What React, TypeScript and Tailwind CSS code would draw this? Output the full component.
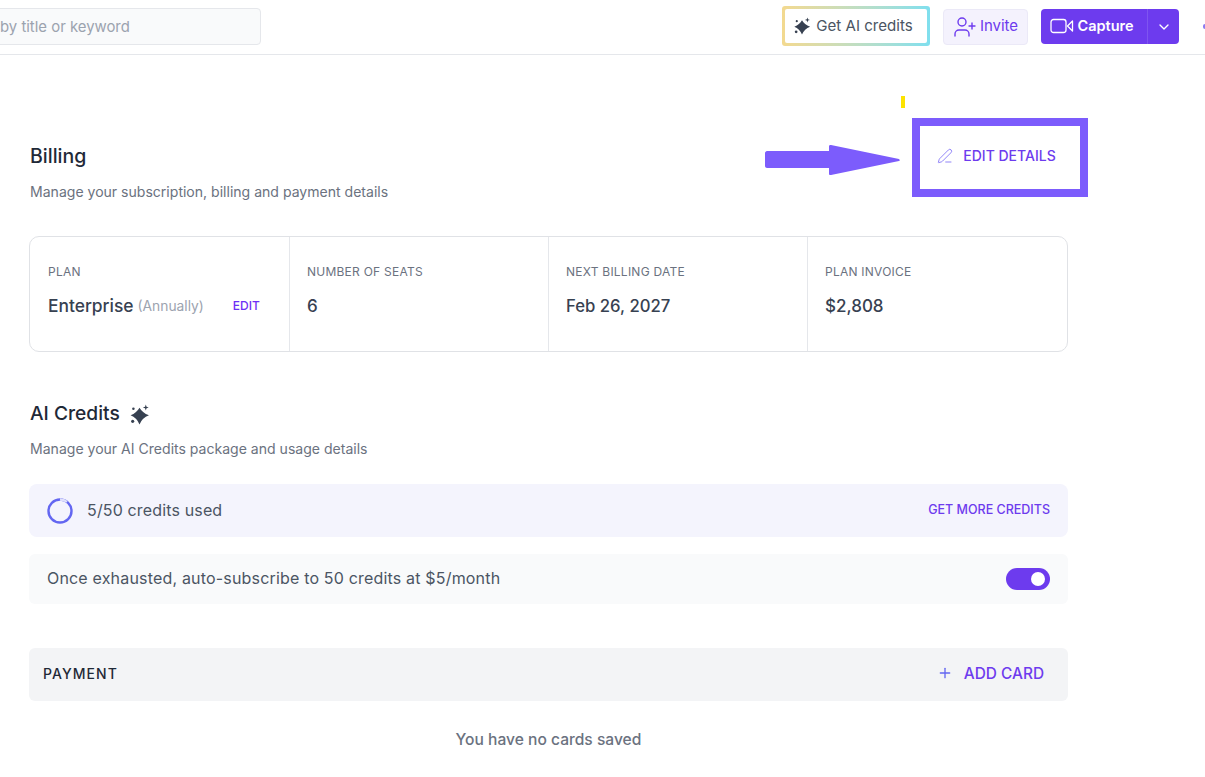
import React from "react";
import { ChevronDown, Plus, PenLine, UserPlus } from "lucide-react";

const Sparkles = ({ className }: { className?: string }) => (
  <svg viewBox="0 0 20 20" className={className} fill="currentColor">
    <path d="M10 3.5 Q12.6 8.1 19 10.8 Q12.6 13.2 10 19.5 Q7.4 13.2 1.5 10.8 Q7.4 8.1 10 3.5 Z" />
    <path d="M16 0.5 L16.7 2.6 L18.8 3.3 L16.7 4 L16 6.1 L15.3 4 L13.2 3.3 L15.3 2.6 Z" />
    <circle cx="4.2" cy="4.6" r="1.2" />
    <circle cx="3.5" cy="16.5" r="1.5" />
  </svg>
);

const Stat = ({ label, children, className }: { label: string; children: React.ReactNode; className: string }) => (
  <div className={`pt-[27px] ${className}`}>
    <div className="text-[12px] leading-[16px] text-[#6b7280] tracking-[0.02em]">{label}</div>
    <div className="mt-[14px] h-[26px] flex items-center">{children}</div>
  </div>
);

export default function App() {
  return (
    <div className="relative h-[777px] w-[1205px] overflow-hidden bg-white font-['Inter',sans-serif] text-[#374151]">
      <header className="flex h-[55px] items-start border-b border-[#e5e7eb]">
        <div className="mt-[8px] ml-[-40px] flex h-[37px] w-[301px] items-center rounded-[4px] border border-[#e5e7eb] bg-[#f9fafb] pl-[39px] pt-[2px] text-[14.9px] text-[#9ca3af] whitespace-nowrap">
          by title or keyword
        </div>
        <div className="ml-auto mt-[6px] flex items-start">
          <div className="h-[40px] w-[148px] rounded-[3px] bg-gradient-to-r from-[#f3d98f] to-[#7fdfee] p-[3px]">
            <div className="flex h-full items-center justify-center gap-[5px] rounded-[2px] bg-white pr-[6px] text-[15.1px] text-[#4b5563]">
              <Sparkles className="h-[18px] w-[18px] text-[#374151]" />
              Get AI credits
            </div>
          </div>
          <div className="ml-[13px] mt-[3px] flex h-[36px] w-[85px] items-center justify-center gap-[3px] rounded-[4px] border border-[#ebe9f7] bg-[#f4f2fd] pb-[1px] text-[15px] text-[#6d3bee]">
            <UserPlus className="h-[24px] w-[24px]" strokeWidth={1.4} />
            Invite
          </div>
          <div className="ml-[13px] mt-[3px] mr-[26px] flex h-[35px] w-[138px] rounded-[4px] bg-[#6d3bee] text-white">
            <div className="flex flex-1 items-center justify-center gap-[3px] pb-[1px] pr-[4px] text-[14.5px] font-semibold">
              <svg viewBox="0 0 24 16" className="h-[16px] w-[24px]" fill="none" stroke="currentColor" strokeWidth="1.3" strokeLinejoin="round">
                <rect x="1" y="1.5" width="15" height="13" rx="2.5" />
                <path d="M22.5 3 L17.5 8 L22.5 13 Z" />
              </svg>
              Capture
            </div>
            <div className="flex w-[32px] items-center justify-center border-l border-[#7f55f0]">
              <ChevronDown className="h-[16px] w-[16px]" />
            </div>
          </div>
        </div>
      </header>

      <main className="w-[1068px] pl-[29px]">
        <h1 className="mt-[88px] pl-[1px] text-[19.5px] leading-[26px] font-medium text-[#1f2937]">Billing</h1>
        <p className="mt-[13px] pl-[1px] text-[14.05px] leading-[20px] text-[#6b7280]">Manage your subscription, billing and payment details</p>

        <div className="mt-[34px] flex h-[116px] rounded-[10px] border border-[#e0e2e6]">
          <Stat label="PLAN" className="w-[260px] border-r border-[#e5e7eb] pl-[18px]">
            <span className="pb-[2px] text-[17.4px] font-medium text-[#374151]">Enterprise</span>
            <span className="ml-[4px] pb-[2px] text-[13.8px] text-[#9ca3af]">(Annually)</span>
            <span className="ml-[29px] pb-[2px] text-[12px] font-medium text-[#6d2ff5]">EDIT</span>
          </Stat>
          <Stat label="NUMBER OF SEATS" className="w-[259px] border-r border-[#e5e7eb] pl-[17px]">
            <span className="text-[17px] font-medium">6</span>
          </Stat>
          <Stat label="NEXT BILLING DATE" className="w-[259px] border-r border-[#e5e7eb] pl-[17px]">
            <span className="text-[16.7px] font-medium">Feb 26, 2027</span>
          </Stat>
          <Stat label="PLAN INVOICE" className="flex-1 pl-[17px]">
            <span className="text-[17px] font-medium">$2,808</span>
          </Stat>
        </div>

        <div className="mt-[49px] flex h-[26px] items-center gap-[9px]">
          <h2 className="pb-[2px] pl-[1px] text-[19.2px] font-medium text-[#1f2937]">AI Credits</h2>
          <Sparkles className="h-[21px] w-[21px] text-[#374151]" />
        </div>
        <p className="mt-[12px] pl-[1px] text-[14.05px] leading-[20px] text-[#6b7280]">Manage your AI Credits package and usage details</p>

        <div className="mt-[25px] flex h-[53px] items-center justify-between rounded-[8px] bg-[#f4f4fd] pl-[18px] pr-[18px]">
          <div className="flex items-center gap-[14px]">
            <svg viewBox="0 0 26 26" className="h-[26px] w-[26px]">
              <circle cx="13" cy="13" r="11.5" fill="none" stroke="#6366f1" strokeWidth="2.4" />
              <path d="M13 1.5 A11.5 11.5 0 0 1 20 3.9" fill="none" stroke="#dfe0fb" strokeWidth="2.4" />
            </svg>
            <span className="pb-[1px] text-[16px] tracking-[0.15px] text-[#4b5563]">5/50 credits used</span>
          </div>
          <span className="text-[12.5px] font-medium text-[#6d3bee]">GET MORE CREDITS</span>
        </div>

        <div className="mt-[17px] flex h-[50px] items-center justify-between rounded-[6px] bg-[#f9fafb] pl-[18px] pr-[18px]">
          <span className="pb-[2px] text-[16px] tracking-[0.18px] text-[#4b5563]">Once exhausted, auto-subscribe to 50 credits at $5/month</span>
          <div className="flex h-[22px] w-[44px] items-center justify-end rounded-full bg-[#6d3bee] pr-[5px]">
            <div className="h-[14px] w-[14px] rounded-full bg-white" />
          </div>
        </div>

        <div className="mt-[44px] flex h-[53px] items-center justify-between rounded-[6px] bg-[#f3f4f6] pl-[14px] pr-[24px]">
          <span className="pb-[2px] text-[14px] font-medium tracking-[0.075em] text-[#1f2937]">PAYMENT</span>
          <div className="flex items-center gap-[11px] pb-[2px] text-[15.4px] font-medium text-[#6d3bee]">
            <Plus className="h-[16px] w-[16px] text-[#6366f1]" strokeWidth={2} />
            ADD CARD
          </div>
        </div>

        <p className="mt-[28px] text-center text-[15.6px] leading-[22px] font-medium text-[#6b7280]">You have no cards saved</p>
      </main>

      {/* Annotation overlay */}
      <div className="absolute left-[1203px] top-[24px] h-[5px] w-[2px] rounded-l-full bg-[#8b7cf0]" />
      <div className="absolute left-[901px] top-[96px] h-[12px] w-[4px] bg-[#fde300]" />
      <div className="absolute left-[912px] top-[118px] flex h-[79px] w-[176px] items-center justify-center gap-[10px] border-[8px] border-[#7c5cfc] bg-white pb-[4px] pr-[7px] text-[14px] font-medium text-[#6d3bee]">
        <PenLine className="h-[16px] w-[16px] text-[#7c6cf5]" strokeWidth={1.25} />
        EDIT DETAILS
      </div>
      <svg viewBox="0 0 136 32" className="absolute left-[765px] top-[145px] h-[32px] w-[136px]" fill="#7c5cfc">
        <path d="M2 6 H64 V1 C64 0 65 0 66 0 L134 14 C135 15 135 16 134 16 L66 30 C65 30 64 30 64 29 V23 H2 C1 23 0 22 0 21 V8 C0 7 1 6 2 6 Z" />
      </svg>
    </div>
  );
}
